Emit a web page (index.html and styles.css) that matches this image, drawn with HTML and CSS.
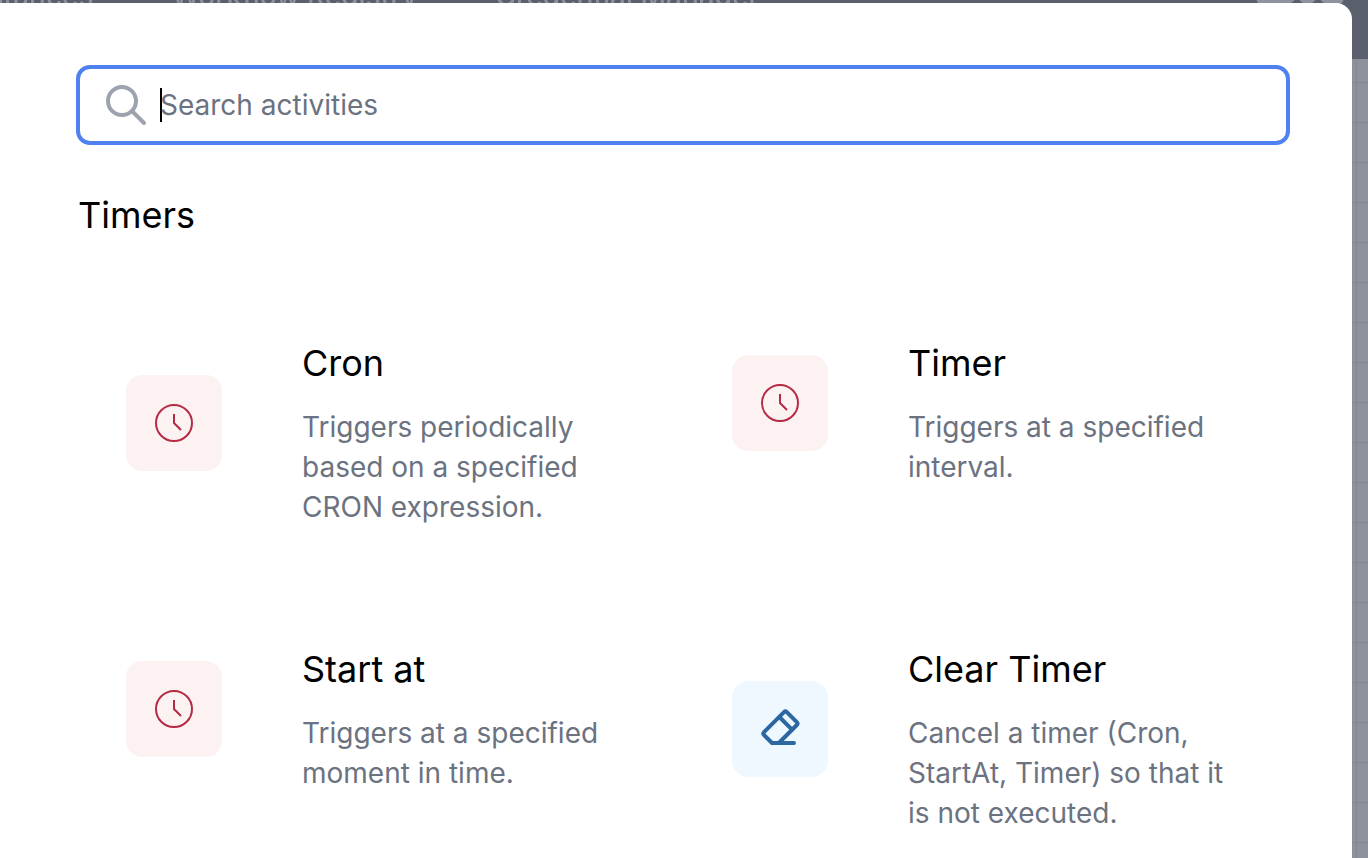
FILE: index.html
```html
<!DOCTYPE html>
<html lang="en">
<head>
<meta charset="utf-8">
<title>Activities</title>
<link rel="stylesheet" href="styles.css">
</head>
<body>
<div class="backdrop">
  <header class="topbar">
    <nav class="nav">
      <a class="nav-link" href="#">Instances</a>
      <a class="nav-link" href="#">Workflow Registry</a>
      <a class="nav-link" href="#">Credential Manager</a>
    </nav>
    <svg class="avatar" viewBox="0 0 96 64"><rect width="96" height="64" y="-16" rx="32" fill="#8f939d"/><path d="M38 36l7-6 7 6zM59 36l7-6 7 6z" fill="#5a5f6d"/></svg>
  </header>
  <div class="canvas"></div>
</div>
<main class="modal" role="dialog" aria-label="Activity picker">
  <div class="search">
    <svg class="search-icon" viewBox="0 0 24 24" fill="none" stroke="currentColor" stroke-width="2" stroke-linecap="round"><circle cx="10" cy="10" r="7"/><path d="M21 21l-6-6"/></svg>
    <span class="caret"></span>
    <input class="search-input" type="text" placeholder="Search activities" aria-label="Search activities">
  </div>
  <h2 class="category">Timers</h2>
  <div class="grid">
    <a class="card" href="#">
      <span class="tile tile-red"><svg class="icon" viewBox="0 0 48 48" fill="none" stroke="currentColor" stroke-width="2"><circle cx="24" cy="24" r="18"/><path d="M24 15v9l7 7"/></svg></span>
      <span class="text"><span class="title">Cron</span><span class="desc">Triggers periodically based on a specified CRON expression.</span></span>
    </a>
    <a class="card" href="#">
      <span class="tile tile-red"><svg class="icon" viewBox="0 0 48 48" fill="none" stroke="currentColor" stroke-width="2"><circle cx="24" cy="24" r="18"/><path d="M24 15v9l7 7"/></svg></span>
      <span class="text"><span class="title">Timer</span><span class="desc">Triggers at a specified interval.</span></span>
    </a>
    <a class="card" href="#">
      <span class="tile tile-red"><svg class="icon" viewBox="0 0 48 48" fill="none" stroke="currentColor" stroke-width="2"><circle cx="24" cy="24" r="18"/><path d="M24 15v9l7 7"/></svg></span>
      <span class="text"><span class="title">Start at</span><span class="desc">Triggers at a specified moment in time.</span></span>
    </a>
    <a class="card" href="#">
      <span class="tile tile-blue"><svg class="icon" viewBox="0 0 24 24" fill="none" stroke="currentColor" stroke-width="2" stroke-linecap="round" stroke-linejoin="round"><path d="M19 19h-11l-4 -4a1 1 0 0 1 0 -1.410l10 -10a1 1 0 0 1 1.410 0l5 5a1 1 0 0 1 0 1.410l-9 9"/><path d="M18 12.300l-6.300 -6.300"/></svg></span>
      <span class="text"><span class="title">Clear Timer</span><span class="desc">Cancel a timer (Cron, StartAt, Timer) so that it is not executed.</span></span>
    </a>
  </div>
</main>
</body>
</html>
```
FILE: styles.css
```css
* { box-sizing: border-box; }
html, body { height: 100%; }
body {
  margin: 0;
  overflow: hidden;
  font-family: Inter, "Liberation Sans", sans-serif;
}
.backdrop {
  position: fixed;
  inset: 0;
  display: flex;
  flex-direction: column;
}
.topbar {
  height: 59px;
  flex: none;
  display: flex;
  align-items: flex-start;
  justify-content: space-between;
  background: #5a5f6d;
}
.nav { display: flex; gap: 78px; margin-top: -20px; margin-left: -36px; }
.nav-link {
  color: #8c919c;
  text-decoration: none;
  font-size: 28px;
  line-height: 32px;
  font-weight: 500;
}
.avatar {
  width: 96px;
  height: 64px;
  margin-top: -32px;
  margin-right: 20px;
  overflow: visible;
}
.canvas {
  flex: 1;
  background-color: #8d919b;
  background-image:
    linear-gradient(#828792 1px, transparent 1px),
    linear-gradient(90deg, #828792 1px, transparent 1px);
  background-size: 40px 40px;
  background-position: 36px 23px;
}
.modal {
  position: relative;
  min-height: 100%;
  margin: 3px 16px 0 0;
  padding: 62px 62px 0 78px;
  border-radius: 0 16px 0 0;
  background: #fff;
}
.search {
  display: flex;
  align-items: center;
  height: 80px;
  margin-left: -2px;
  padding: 0 22px;
  border: 4px solid #4f82f0;
  border-radius: 14px;
}
.search-icon { width: 48px; height: 48px; flex: none; margin-right: 10px; color: #9ca3af; }
.caret { width: 2px; height: 34px; flex: none; margin-right: -2px; background: #000; }
.search-input {
  flex: 1;
  min-width: 0;
  padding: 0;
  border: 0;
  outline: 0;
  background: transparent;
  font: inherit;
  font-size: 28px;
  line-height: 40px;
}
.search-input::placeholder { color: #6b7280; opacity: 1; }
.category {
  margin: 42px 0 0;
  font-size: 36px;
  line-height: 56px;
  font-weight: 400;
}
.grid {
  display: grid;
  grid-template-columns: 1fr 1fr;
  gap: 2px 0;
  margin-top: 28px;
}
.card {
  display: flex;
  align-items: center;
  align-self: start;
  gap: 80px;
  padding: 48px;
  color: #000;
  text-decoration: none;
}
.tile {
  display: flex;
  flex: none;
  align-items: center;
  justify-content: center;
  width: 96px;
  height: 96px;
  border-radius: 16px;
}
.tile-red { background: #fdf2f2; color: #b52a45; }
.tile-blue { background: #f0f8ff; color: #2c67a2; }
.icon { width: 48px; height: 48px; }
.text { display: block; flex: 1; }
.title { display: block; padding: 16px 0; font-size: 36px; line-height: 56px; }
.desc { display: block; color: #6b7280; font-size: 28px; line-height: 40px; }
```
